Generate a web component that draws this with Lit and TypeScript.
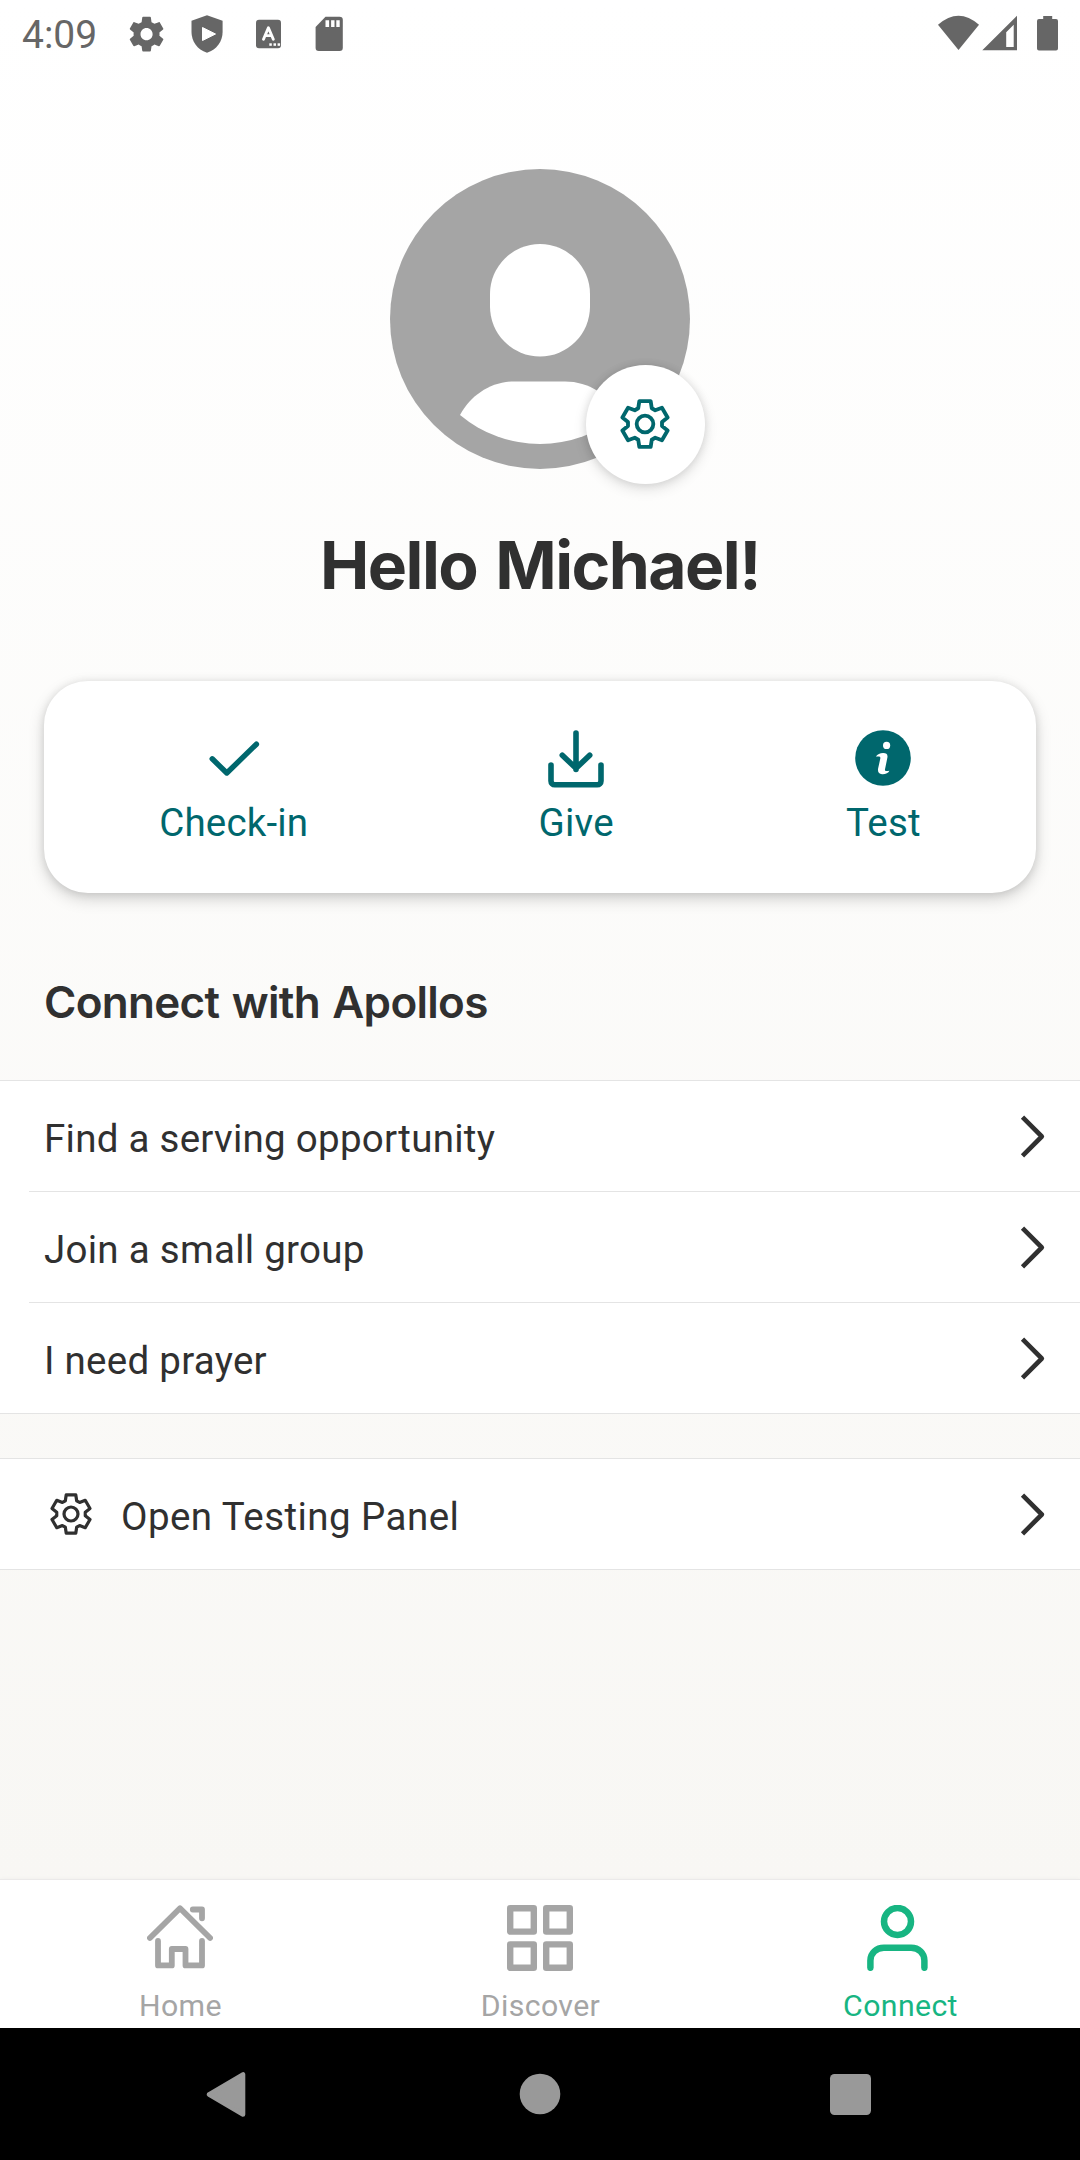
import { LitElement, html, svg, css } from "lit";
import { customElement, property } from "lit/decorators.js";

/** Closed outline of a six-toothed cog, centred on the origin. */
function cogPath(): string {
  const turn = (x: number, y: number, deg: number) => {
    const a = (deg * Math.PI) / 180;
    const px = x * Math.cos(a) - y * Math.sin(a);
    const py = x * Math.sin(a) + y * Math.cos(a);
    return `${px.toFixed(2)} ${py.toFixed(2)}`;
  };
  const points: string[] = [];
  for (let k = 0; k < 6; k++) {
    points.push(turn(-17, -68.5, 60 * k), turn(17, -68.5, 60 * k));
    points.push(turn(-6, -51, 60 * k + 30), turn(6, -51, 60 * k + 30));
  }
  return `M${points.join("L")}Z`;
}

const COG = cogPath();

const icons: Record<string, unknown> = {
  check: svg`<svg width="56" height="58" viewBox="0 0 56 58" fill="none" stroke="currentColor" stroke-width="5.4" stroke-linecap="round" stroke-linejoin="round"><path d="M6.2 28.8 20.8 43 50.4 14.2"/></svg>`,
  give: svg`<svg width="56" height="58" viewBox="0 0 56 58" fill="none" stroke="currentColor" stroke-width="5.6" stroke-linecap="round" stroke-linejoin="round"><path d="M28 3v36.5M14.3 25.2 28 38.3 41.7 25.2M3 35v16a3.800 3.800 0 0 0 3.800 3.800h42.400a3.800 3.800 0 0 0 3.800-3.800V35"/></svg>`,
  info: svg`<svg width="56" height="58" viewBox="0 0 56 58"><circle cx="28" cy="28" r="27.8" fill="currentColor"/><circle cx="31.6" cy="15.4" r="3.6" fill="#fff"/><path fill="#fff" d="M20.900 26.600C22.500 24.300 25 23.200 28 23.100 31.200 23 33 24.400 32.400 27.600L30 39.300C29.700 41 30.600 41.500 34.400 40.700 33.600 43 30 44.500 27 44.200 24 43.900 22.500 42 23.100 38.600L25.300 28.600C25.700 26.600 24.600 26.200 20.900 26.600Z"/></svg>`,
  home: svg`<svg width="66" height="66" viewBox="0 0 66 66" fill="none" stroke="currentColor" stroke-width="5.8" stroke-linecap="round" stroke-linejoin="round"><path d="M2.900 33 33 3.200 63.100 33M45.800 4.500H55v8.800M11 36v24.400h13.800V44H38.500v16.400H55V36"/></svg>`,
  discover: svg`<svg width="66" height="66" viewBox="0 0 66 66" fill="none" stroke="currentColor" stroke-width="6.4" stroke-linejoin="round"><path d="M3.200 3.200h23.600v23.400H3.200zM39.200 3.200h23.600v23.400H39.200zM3.200 39.400h23.600v23.400H3.200zM39.200 39.400h23.600v23.400H39.200z"/></svg>`,
  connect: svg`<svg width="66" height="66" viewBox="0 0 66 66" fill="none" stroke="currentColor" stroke-width="6.5" stroke-linecap="round"><circle cx="30.500" cy="16.500" r="13.500"/><path d="M3.400 62.800V55.500C3.400 48 9.400 42.800 16.900 42.800h27.200C51.600 42.800 57.400 48 57.400 55.500v7.300"/></svg>`,
};

@customElement("cog-icon")
class CogIcon extends LitElement {
  static styles = css`
    :host { display: block; }
    .cog { display: block; width: 100%; height: 100%; }
  `;
  render() {
    return html`<svg class="cog" viewBox="-75 -75 150 150" fill="none" stroke="currentColor" stroke-width="11.5" stroke-linejoin="round">
      <path d=${COG} /><circle r="25" />
    </svg>`;
  }
}

@customElement("status-bar")
class StatusBar extends LitElement {
  static styles = css`
    :host { display: flex; align-items: center; height: 67px; padding: 0 22px; color: #666; }
    svg { display: block; flex: none; }
    .time { font: 400 39px/67px Roboto, sans-serif; width: 107px; padding-top: 2px; box-sizing: border-box; height: 67px; }
    .notices { display: flex; align-items: center; gap: 20px; flex: 1; }
    .card { margin-left: 3px; }
    .signals { display: flex; align-items: center; }
  `;
  render() {
    return html`
      <div class="time">4:09</div>
      <div class="notices">
        <svg width="36" height="40" viewBox="0 0 36 40" fill="currentColor"><g transform="translate(-3.200 -.6) scale(1.73)"><path d="M19.430 12.980c.04-.32.07-.64.07-.98s-.03-.66-.07-.98l2.110-1.650c.19-.15.24-.42.12-.64l-2-3.460c-.12-.22-.39-.3-.61-.22l-2.490 1c-.52-.4-1.080-.73-1.690-.98l-.38-2.650C14.460 2.180 14.250 2 14 2h-4c-.25 0-.46.18-.49.42l-.38 2.650c-.61.25-1.170.59-1.690.98l-2.490-1c-.23-.09-.49 0-.61.22l-2 3.460c-.13.22-.07.49.12.64l2.110 1.650c-.04.32-.07.65-.07.98s.03.66.07.98l-2.110 1.650c-.19.15-.24.42-.12.64l2 3.460c.12.22.39.3.61.22l2.490-1c.52.4 1.080.73 1.690.98l.38 2.650c.03.24.24.42.49.42h4c.25 0 .46-.18.49-.42l.38-2.650c.61-.25 1.170-.59 1.690-.98l2.490 1c.23.09.49 0 .61-.22l2-3.460c.12-.22.07-.49-.12-.64l-2.110-1.650zM12 15.500c-1.930 0-3.500-1.570-3.500-3.500s1.570-3.500 3.500-3.500 3.500 1.570 3.500 3.500-1.570 3.500-3.500 3.500z"/></g></svg>
        <svg width="44" height="40" viewBox="0 0 44 40"><path d="M22 1.300 37.600 6.800V18C37.600 27 32 35.500 22 38.800 12 35.500 6.500 27 6.500 18V6.800Z" fill="currentColor"/><path d="M17.500 13.500v13L30.500 20z" fill="#fff" stroke="#fff" stroke-linejoin="round"/></svg>
        <svg width="40" height="40" viewBox="0 0 40 40"><rect x="7" y="5.700" width="25" height="28.600" rx="3" fill="currentColor"/><path d="M14.500 25.200 19.400 13.800 24.300 25.200M16.200 21.600h6.400" fill="none" stroke="#fff" stroke-width="2.900" stroke-linecap="round" stroke-linejoin="round"/><g fill="#fff"><rect x="20.300" y="29.300" width="2.500" height="2.500"/><rect x="24.500" y="29.300" width="2.500" height="2.500"/><rect x="28.600" y="29.300" width="2.500" height="2.500"/></g></svg>
        <svg class="card" width="32" height="40" viewBox="0 0 32 40"><path d="M13.500 2.800H27.600a3.200 3.200 0 0 1 3.200 3.200V33.800a3.200 3.200 0 0 1-3.200 3.200H6.800a3.200 3.200 0 0 1-3.200-3.200V13Z" fill="currentColor"/><path d="M13.500 6.200h3.600v6.800h-3.600zM19.100 6.200h3.400v6.800h-3.400zM24.300 6.200h3.400v6.800h-3.400z" fill="#fff"/></svg>
      </div>
      <div class="signals">
        <svg width="120" height="40" viewBox="0 0 120 40" fill="currentColor"><path d="M20.500 36 0 10.800Q20.500-7.200 41 10.800Z"/><path fill-rule="evenodd" d="M44.300 36.300 79 1.800V36.300ZM68.200 33H75.700V10.800L68.200 18.300Z"/><path d="M105.200 2h9v3h3.800a2 2 0 0 1 2 2v27.500a2 2 0 0 1-2 2h-17a2 2 0 0 1-2-2V7a2 2 0 0 1 2-2h4.200z"/></svg>
      </div>
    `;
  }
}

@customElement("list-row")
class ListRow extends LitElement {
  @property() label = "";
  @property({ type: Boolean }) cog = false;
  static styles = css`
    :host { display: flex; align-items: center; height: 110px; padding: 0 34px 0 44px; color: #303030; }
    .cog { width: 42px; height: 42px; margin: 0 29px 0 6px; }
    .label { flex: 1; font: 400 38.5px/46px Roboto, sans-serif; letter-spacing: 0.27px; padding-top: 5px; }
    .cog + .label { letter-spacing: 0.44px; }
    .chevron { display: block; }
  `;
  render() {
    return html`
      ${this.cog ? html`<cog-icon class="cog"></cog-icon>` : ""}
      <span class="label">${this.label}</span>
      <svg class="chevron" width="26" height="44" viewBox="0 0 26 44" fill="none" stroke="currentColor" stroke-width="4.6" stroke-linejoin="round">
        <path d="M2.500 3.200 21.800 22.500 2.500 41.800" />
      </svg>
    `;
  }
}

@customElement("app-root")
class AppRoot extends LitElement {
  static styles = css`
    :host {
      display: flex; flex-direction: column; width: 1080px; height: 2160px; overflow: hidden;
      font-family: Roboto, sans-serif; color: #303030; background: #fff;
    }
    svg { display: block; }
    .page {
      height: 1880px; display: flex; flex-direction: column;
      background: linear-gradient(#fff, #f8f7f4);
    }
    .profile { display: flex; flex-direction: column; align-items: center; padding-top: 102px; }
    .avatar { position: relative; width: 300px; height: 300px; }
    .settings {
      position: absolute; left: 196px; top: 196px; width: 119px; height: 119px; border-radius: 50%;
      background: #fff; color: #00676d; display: grid; place-items: center;
      box-shadow: 0 5px 14px rgba(0, 0, 0, 0.12), 0 0 8px rgba(0, 0, 0, 0.1);
    }
    .settings-icon { width: 50px; height: 50px; margin: 0 1px 1px 0; }
    .greeting {
      margin: 56px 0 0; font: 700 66px/80px Inter, sans-serif;
      letter-spacing: -1.55px; word-spacing: 4px; white-space: nowrap;
    }
    .actions {
      margin: 76px 44px 0; height: 212px; box-sizing: border-box; border-radius: 44px; background: #fff; color: #00676d;
      display: flex; justify-content: space-around; padding-top: 49px;
      box-shadow: 0 6px 16px rgba(0, 0, 0, 0.17), 0 1px 8px rgba(0, 0, 0, 0.1);
    }
    .action { display: flex; flex-direction: column; align-items: center; }
    .action:nth-child(2) { margin-right: 2px; }
    .action-label { font-size: 38.5px; line-height: 46px; letter-spacing: 0.2px; margin-top: 12px; }
    .section-title {
      margin: 79px 44px 48px; font: 600 44px/60px Inter, sans-serif;
      letter-spacing: -0.7px; word-spacing: 2px; white-space: nowrap;
    }
    .group { background: #fff; border-top: 1px solid #e4e4e4; border-bottom: 1px solid #e4e4e4; }
    .group + .group { margin-top: 44px; }
    .divider { height: 1px; margin-left: 29px; background: #e4e4e4; }
    .tabs {
      position: relative; height: 148px; display: grid; grid-template-columns: repeat(3, 1fr); background: #fff; color: #a5a5a5;
      box-shadow: 0 -1px 0 #ebeaea, 0 0 5px rgba(0, 0, 0, 0.06);
    }
    .tab { display: flex; flex-direction: column; align-items: center; padding-top: 25px; }
    .tab.active { color: #17b582; }
    .tab-label { font-size: 30.25px; line-height: 36px; letter-spacing: 0.38px; margin-top: 17px; padding-left: 1px; }
    .system-nav { height: 132px; background: #000; }
  `;
  private actions = [
    ["check", "Check-in"],
    ["give", "Give"],
    ["info", "Test"],
  ];
  private links = ["Find a serving opportunity", "Join a small group", "I need prayer"];
  private tabs = [
    ["home", "Home"],
    ["discover", "Discover"],
    ["connect", "Connect"],
  ];
  render() {
    return html`
      <div class="page">
        <status-bar></status-bar>
        <div class="profile">
          <div class="avatar">
            <svg width="300" height="300" viewBox="0 0 300 300">
              <circle cx="150" cy="150" r="150" fill="#a5a5a5" />
              <rect x="100" y="75" width="100" height="112.5" rx="50" fill="#fff" />
              <path d="M70 246C81 226 101 212.400 125 212.400H175C199 212.400 219 226 230 246A125 125 0 0 1 70 246Z" fill="#fff" />
            </svg>
            <div class="settings"><cog-icon class="settings-icon"></cog-icon></div>
          </div>
          <h1 class="greeting">Hello Michael!</h1>
        </div>
        <div class="actions">
          ${this.actions.map(([icon, label]) => html`<div class="action">${icons[icon]}<span class="action-label">${label}</span></div>`)}
        </div>
        <h2 class="section-title">Connect with Apollos</h2>
        <div class="group">
          ${this.links.map((label, i) => html`${i ? html`<div class="divider"></div>` : ""}<list-row .label=${label}></list-row>`)}
        </div>
        <div class="group"><list-row label="Open Testing Panel" cog></list-row></div>
      </div>
      <div class="tabs">
        ${this.tabs.map(([icon, label]) => html`<div class="tab ${icon === "connect" ? "active" : ""}">${icons[icon]}<span class="tab-label">${label}</span></div>`)}
      </div>
      <div class="system-nav">
        <svg width="1080" height="132" viewBox="0 0 1080 132" fill="#999">
          <path d="M209 66.500 243 46.500V86.500Z" stroke="#999" stroke-width="4.6" stroke-linejoin="round" />
          <circle cx="540" cy="66" r="20.3" />
          <rect x="830" y="46" width="41" height="41" rx="4.5" />
        </svg>
      </div>
    `;
  }
}
